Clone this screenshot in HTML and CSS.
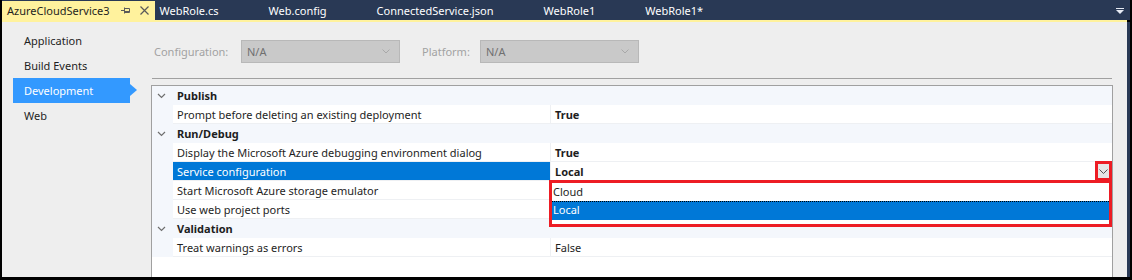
FILE: index.html
```html
<!DOCTYPE html>
<html lang="en">
<head>
  <meta charset="UTF-8" />
  <title>AzureCloudService3 - Properties</title>
  <link rel="stylesheet" href="styles.css">
</head>
<body>
  <div class="window">
    <div class="tabstrip">
      <div class="tab tab-active">
        <span class="tab-title">AzureCloudService3</span>
        <span class="tab-icons">
          <svg width="10" height="9" viewBox="0 0 10 9"><path d="M0 4.5H3M3.5 1.5V7.5M3.5 2.5H8.5V6.5H3.5M3.5 5.5H8.5" fill="none" stroke="#5a5a5a" stroke-width="1"/></svg>
          <svg width="9" height="9" viewBox="0 0 9 9"><path d="M0.5 0.5L8.5 8.5M8.5 0.5L0.5 8.5" fill="none" stroke="#5a5a5a" stroke-width="1.2"/></svg>
        </span>
      </div>
      <div class="tab"><span class="tab-title">WebRole.cs</span><span class="tab-icons"></span></div>
      <div class="tab"><span class="tab-title">Web.config</span><span class="tab-icons"></span></div>
      <div class="tab"><span class="tab-title">ConnectedService.json</span><span class="tab-icons"></span></div>
      <div class="tab"><span class="tab-title">WebRole1</span><span class="tab-icons"></span></div>
      <div class="tab"><span class="tab-title">WebRole1*</span><span class="tab-icons"></span></div>
      <div class="tab-overflow">
        <svg width="8" height="6" viewBox="0 0 8 6"><path d="M0 0H8V1H0Z M0 2H8L4 6Z" fill="#e8ecf4"/></svg>
      </div>
    </div>
    <div class="accent"></div>

    <div class="content">
      <nav class="sidenav">
        <div class="side-item">Application</div>
        <div class="side-item">Build Events</div>
        <div class="side-item selected">Development</div>
        <div class="side-item">Web</div>
      </nav>

      <main class="page">
        <div class="config-row">
          <span class="config-label">Configuration:</span>
          <div class="combo">
            <span>N/A</span>
            <svg width="8" height="5" viewBox="0 0 8 5"><path d="M0.5 0.5L4 4L7.5 0.5" fill="none" stroke="#a8a8a8"/></svg>
          </div>
          <span class="config-label platform">Platform:</span>
          <div class="combo">
            <span>N/A</span>
            <svg width="8" height="5" viewBox="0 0 8 5"><path d="M0.5 0.5L4 4L7.5 0.5" fill="none" stroke="#a8a8a8"/></svg>
          </div>
        </div>

        <div class="rule"></div>

        <div class="grid">
          <div class="cat">
            <span class="gutter"><svg width="9" height="6" viewBox="0 0 9 6"><path d="M1 1L4.5 4.5L8 1" fill="none" stroke="#6f6f6f" stroke-width="1.2"/></svg></span>
            <span class="cat-name">Publish</span>
          </div>
          <div class="row">
            <span class="gutter"></span>
            <span class="name">Prompt before deleting an existing deployment</span>
            <span class="value bold">True</span>
          </div>

          <div class="cat">
            <span class="gutter"><svg width="9" height="6" viewBox="0 0 9 6"><path d="M1 1L4.5 4.5L8 1" fill="none" stroke="#6f6f6f" stroke-width="1.2"/></svg></span>
            <span class="cat-name">Run/Debug</span>
          </div>
          <div class="row">
            <span class="gutter"></span>
            <span class="name">Display the Microsoft Azure debugging environment dialog</span>
            <span class="value bold">True</span>
          </div>
          <div class="row row-selected">
            <span class="gutter"></span>
            <span class="name">Service configuration</span>
            <span class="value bold">
              Local
              <span class="drop-btn">
                <svg width="9" height="5" viewBox="0 0 9 5"><path d="M0.5 0.5L4.5 4.5L8.5 0.5" fill="none" stroke="#555" stroke-width="1"/></svg>
              </span>
            </span>
          </div>
          <div class="row">
            <span class="gutter"></span>
            <span class="name">Start Microsoft Azure storage emulator</span>
            <span class="value"></span>
          </div>
          <div class="row">
            <span class="gutter"></span>
            <span class="name">Use web project ports</span>
            <span class="value"></span>
          </div>

          <div class="cat">
            <span class="gutter"><svg width="9" height="6" viewBox="0 0 9 6"><path d="M1 1L4.5 4.5L8 1" fill="none" stroke="#6f6f6f" stroke-width="1.2"/></svg></span>
            <span class="cat-name">Validation</span>
          </div>
          <div class="row">
            <span class="gutter"></span>
            <span class="name">Treat warnings as errors</span>
            <span class="value">False</span>
          </div>

          <!-- open list of the Service configuration combo -->
          <div class="drop-list">
            <div class="opt">Cloud</div>
            <div class="opt opt-active">Local</div>
          </div>
          <div class="mark-btn"></div>
        </div>
      </main>
    </div>
  </div>
</body>
</html>
```

FILE: styles.css
```css
* {
  box-sizing: border-box;
}
body {
  margin: 0;
  background: #000;
  font-family: "Segoe UI", "Noto Sans", sans-serif;
  font-size: 11px;
  color: #1e1e1e;
}
.window {
  width: 1132px;
  height: 280px;
  padding: 0 2px 3px 2px;
  background: #000;
}
.tabstrip {
  display: flex;
  height: 20px;
  background: #293955;
  padding-top: 1px;
}
.tab {
  display: flex;
  align-items: center;
  padding: 0 6px 0 5px;
  color: #fff;
  white-space: nowrap;
}
.tab-active {
  background: #fff29d;
  color: #1e1e1e;
  padding: 0 6px 0 5px;
}
.tab-icons {
  display: flex;
  align-items: center;
  justify-content: space-between;
  width: 28px;
  margin-left: 11px;
}
.tab-overflow {
  margin-left: auto;
  margin-right: 6px;
  display: flex;
  align-items: center;
}
.accent {
  height: 2px;
  background: #fff29d;
  margin-right: 3px;
}
.content {
  display: flex;
  height: 255px;
  background: #eeeeee;
  border-right: 3px solid #293955;
}
.sidenav {
  width: 149px;
  padding-top: 6px;
}
.side-item {
  position: relative;
  width: 117px;
  height: 25px;
  line-height: 25px;
  margin-left: 11px;
  padding-left: 11px;
}
.side-item.selected {
  background: #3399ff;
  color: #fff;
}
.side-item.selected::after {
  content: "";
  position: absolute;
  right: -7px;
  top: 6px;
  border-left: 7px solid #3399ff;
  border-top: 6.5px solid transparent;
  border-bottom: 6.5px solid transparent;
}
.page {
  flex: 1;
  display: flex;
  flex-direction: column;
  padding: 18px 14px 0 0;
}
.config-row {
  display: flex;
  align-items: center;
  height: 23px;
}
.config-label {
  color: #a2a2a2;
  margin-left: 3px;
  width: 87px;
}
.config-label.platform {
  margin-left: 22px;
  width: 58px;
}
.combo {
  display: flex;
  align-items: center;
  justify-content: space-between;
  width: 159px;
  height: 23px;
  padding: 0 9px 0 5px;
  background: #c9c9c9;
  border: 1px solid #b8b8b8;
  color: #707070;
}
.rule {
  height: 1px;
  margin: 15px 1px 0 1px;
  background: #a0a0a0;
}
.grid {
  position: relative;
  flex: 1;
  margin-top: 6px;
  background: #fff;
  border: 1px solid #a0a0a0;
  border-bottom: none;
}
.cat,
.row {
  display: flex;
  height: 19px;
  line-height: 17px;
}
.cat {
  background: #f4f7fc;
  font-weight: bold;
}
.gutter {
  display: flex;
  align-items: center;
  width: 21px;
  padding-left: 5px;
  background: #f4f7fc;
}
.cat-name {
  padding: 1px 0 0 4px;
}
.name {
  width: 378px;
  padding: 1px 0 0 4px;
  border-bottom: 1px solid #eef0f3;
  border-right: 1px solid #eef0f3;
  white-space: nowrap;
}
.value {
  flex: 1;
  display: flex;
  align-items: center;
  padding: 1px 0 0 4px;
  border-bottom: 1px solid #eef0f3;
}
.bold {
  font-weight: bold;
}
.row-selected .name {
  background: #0078d7;
  color: #fff;
}
.drop-btn {
  display: flex;
  align-items: center;
  justify-content: center;
  width: 15px;
  height: 18px;
  margin-top: -1px;
  margin-left: auto;
  margin-right: 1px;
  background: #e6e6e6;
}
.drop-list {
  position: absolute;
  left: 397px;
  top: 94px;
  width: 563px;
  height: 47px;
  border: 3px solid #ed1c24;
  background: #fff;
}
.opt {
  height: 18px;
  line-height: 18px;
  padding-left: 1px;
}
.opt-active {
  height: 19px;
  line-height: 16px;
  border-top: 1px dotted #000;
  background: #0078d7;
  color: #fff;
}
.mark-btn {
  position: absolute;
  left: 943px;
  top: 75px;
  width: 17px;
  height: 20px;
  border: 3px solid #ed1c24;
}
```
